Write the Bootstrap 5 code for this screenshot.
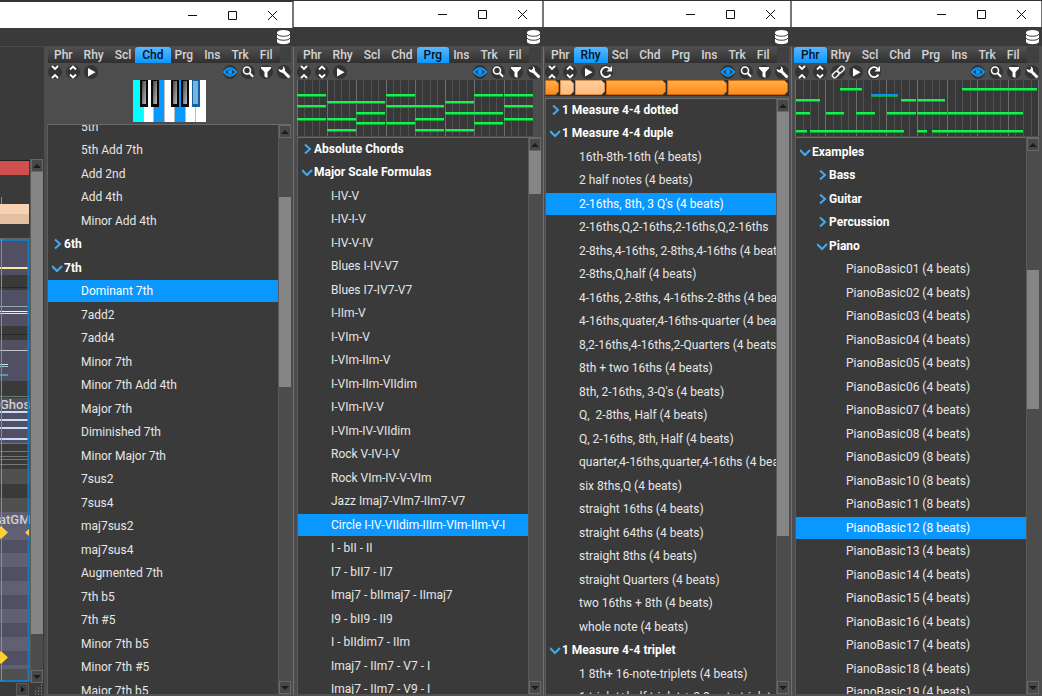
<!DOCTYPE html>
<html lang="en">
<head>
<meta charset="utf-8">
<meta name="viewport" content="width=device-width, initial-scale=1">
<title>Browser panels</title>
<link href="https://cdn.jsdelivr.net/npm/bootstrap@5.3.0/dist/css/bootstrap.min.css" rel="stylesheet">
<style>
  body { background: #3a3a3a; color: #e6e6e6; font-family: Roboto, "Liberation Sans", sans-serif; font-size: 12px; line-height: 20px; }
  button { color: inherit; background: none; border: 0; padding: 0; }
  svg { display: block; }
  .win { border-top: 1px solid #333; min-width: 0; }
  .win-a { flex: 293 1 0; border-top-width: 2px; }
  .win-b { flex: 250 1 0; }
  .win-c { flex: 248 1 0; }
  .win-d { flex: 251 1 0; }
  .titlebar { height: 26px; flex: none; background: #fff; color: #111; border-right: 1px solid #777; }
  .win + .win .titlebar { border-left: 1px solid #777; }
  .titlebar button { width: 40px; }
  .strip { height: 20px; flex: none; background: #3a3a3a; border-bottom: 1px solid #4a4a4a; padding-right: 2px; }
  .win-a .strip { height: 19px; }
  .pane { background: #4d4d4d; padding: 0 2px 0 4px; min-width: 0; min-height: 0; border-bottom: 2px solid #505050; }
  .win + .win .pane { border-left: 1px solid #707070; padding-left: 3px; }
  .win-c.win .pane { padding-left: 1px !important; }
  .win-d .pane { padding-right: 3px; }
  .tabstrip { height: 16px; gap: 1px; background: linear-gradient(#505050, #303030); padding: 0 2px 0 1px; width: max-content; }
  .tabrow { background: #404040; flex: none; }
  .tabstrip button { padding: 0 5px; line-height: 15px; font-weight: 500; color: #d4d4d4; }
  .tabstrip button.active { background: linear-gradient(#5ab8ff, #0a98ff); color: #06121c; padding: 0 7px; margin: 0 -2px; border-radius: 3px 3px 0 0; }
  .tools { height: 17px; flex: none; overflow: hidden; margin: 0 -2px; }
  .tools button { width: 18px; flex: none; }
  .tree { background: #3a3a3a; border-top: 1px solid #6a6a6a; border-left: 1px solid #5c5c5c; min-height: 0; }
  .win-a .tree { margin-left: -1px; }
  .rows { display: grid; grid-auto-rows: 23px 24px; align-content: start; margin: -1px 0 0; padding: 0; list-style: none; min-width: 0; }
  .win-a .rows { margin-top: -10px; }
  .win-d .rows { margin-top: 2px; }
  .rows li { height: 22px; margin-top: 1px; line-height: 22px; padding-left: 33px; white-space: pre; overflow: hidden; }
  .rows .deep { padding-left: 50px; }
  .rows .folder { padding-left: 4px; font-weight: 700; color: #fff; }
  .rows .sub { padding-left: 21px; }
  .rows .folder button { display: flex; align-items: center; gap: 1px; font-weight: inherit; line-height: inherit; }
  .rows .picked { background: #0a98ff; color: #fff; }
  .scroller { width: 13px; flex: none; background: #4c4c4c; border-left: 1px solid #5a5a5a; }
  .scroller button { height: 13px; flex: none; border: 1px solid #686868; background: #484848; color: #222; }
  .thumb { background: #858585; }
  .preview-s { height: 18px; flex: none; }
  .preview-m { height: 44px; flex: none; }
  .preview-l { height: 57px; flex: none; }
  .lane { width: 44px; flex: none; background: #3a3a3a; }
  .lane svg text { font-size: 13px; font-weight: 500; fill: #d0d0d0; }
  .lane-top { height: 112px; flex: none; }
  .lane-foot { height: 13px; flex: none; }
</style>
</head>
<body>
<main class="d-flex vh-100 overflow-hidden">

  <section class="win win-a d-flex flex-column" data-tab="Chd" data-tools="fold,unfold,play">
    <div class="d-flex flex-fill overflow-hidden">
      <div class="lane d-flex flex-column">
        <div class="d-flex flex-fill overflow-hidden">
          <svg width="30" height="635" viewBox="0 47 30 635" aria-label="Track lanes">
            <rect y="47" width="30" height="635" fill="#3a3a3a"/>
            <path d="M0 160.500H30" stroke="#222"/>
            <rect y="161" width="29" height="14" fill="#d05050"/>
            <rect x="1" y="197" width="1" height="7" fill="#888"/>
            <rect y="204" width="29" height="10" fill="#f8d2b2"/><rect y="214" width="29" height="10" fill="#e4c0a2"/>
            <rect y="238" width="30" height="1" fill="#666"/>
            <g fill="#505062"><rect y="239" width="30" height="36"/><rect y="290" width="30" height="36"/><rect y="340" width="30" height="41"/><rect y="398" width="30" height="46"/></g>
            <g fill="#262626"><rect y="287" width="30" height="1"/><rect y="334" width="30" height="1"/></g>
            <rect y="267" width="29" height="2" fill="#ffe9a0"/>
            <rect y="306" width="29" height="1" fill="#94a8b4"/><rect y="311" width="29" height="1" fill="#ffe8ee"/><rect y="313" width="29" height="1" fill="#d4f0c0"/>
            <rect y="350" width="29" height="1" fill="#c4c4c4"/>
            <rect y="364" width="8" height="1" fill="#ddd"/><rect y="366" width="8" height="1" fill="#8cc8e8"/><rect y="374" width="8" height="2" fill="#5c94ac"/>
            <rect y="396" width="29" height="1" fill="#648064"/>
            <g fill="#c8dcff"><rect y="411" width="29" height="2"/><rect y="419" width="29" height="2"/><rect y="427" width="29" height="2"/><rect y="438" width="29" height="2"/></g>
            <g fill="#777"><rect y="443" width="29" height="1"/><rect y="451" width="29" height="1"/><rect y="456" width="29" height="1"/><rect y="464" width="29" height="1"/></g>
            <rect y="459" width="29" height="1" fill="#648064"/>
            <text x="0" y="409">Ghos</text>
            <rect y="469" width="30" height="15" fill="#505050"/><rect y="498" width="30" height="14" fill="#505050"/>
            <rect y="512" width="30" height="157" fill="#606072"/>
            <g fill="#505062"><rect y="540" width="30" height="13"/><rect y="567" width="30" height="14"/><rect y="595" width="30" height="14"/><rect y="623" width="30" height="14"/><rect y="651" width="30" height="14"/></g>
            <rect y="669" width="30" height="12" fill="#505050"/>
            <text x="-1" y="524">atGM</text>
            <path d="M0 240H28.500V681H0" fill="none" stroke="#1878b8" stroke-width="2"/>
            <rect x="1" y="239" width="1" height="442" fill="#8a8a9a"/>
            <path d="M1 526l7 6.500-7 6.500-7-6.500zM1 651l7 6.500-7 6.500-7-6.500zM29 529v7l-4-3.500z" fill="#ffd034"/>
          </svg>
          <div class="d-flex flex-column flex-fill">
            <div class="lane-top"></div>
            <div class="flex-fill d-flex" data-scroll="0,458,36"></div>
          </div>
        </div>
        <div class="lane-foot d-flex justify-content-between">
          <svg width="30" height="13"><path d="M16.500 .5h12v12h-12z" fill="#444" stroke="#5c5c5c"/><path d="M21 3.500v6l4-3z" fill="#151515"/></svg>
          <svg width="14" height="13"><path d="M11 2h1M11 5h1M8 5h1M11 8h1M8 8h1M5 8h1M11 11h1M8 11h1M5 11h1" stroke="#aaa"/></svg>
        </div>
      </div>
      <div class="pane d-flex flex-column flex-fill" data-scroll-tree="59,190,294">
        <div class="preview-m d-flex justify-content-center">
          <svg width="73" height="42" role="img" aria-label="Chord keys">
            <defs><linearGradient id="key" x1="0" x2="1" y1="0" y2="1"><stop offset="0" stop-color="#444"/><stop offset="1" stop-color="#bbb"/></linearGradient></defs>
            <rect width="73" height="42" fill="#fff"/><rect width="10" height="42" fill="#00ffff"/>
            <rect x="21" width="10" height="42" fill="#0a98ff"/><rect x="42" width="10" height="42" fill="#0a98ff"/>
            <path d="M10.500 0v42M20.500 0v42M31.500 0v42M41.500 0v42M52.500 0v42M62.500 0v42" stroke="#bbb"/>
            <g fill="#080808"><rect x="7" width="8" height="27"/><rect x="18" width="8" height="27"/><rect x="38" width="8" height="27"/><rect x="48" width="8" height="27"/></g>
            <g fill="url(#key)"><rect x="9" y="1" width="4" height="23"/><rect x="20" y="1" width="4" height="23"/><rect x="40" y="1" width="4" height="23"/><rect x="50" y="1" width="4" height="23"/></g>
            <rect x="59" width="8" height="27" fill="#1064a4"/><rect x="60" y="1" width="5" height="23" fill="#7cb4d4"/>
          </svg>
        </div>
        <script type="text/plain">5th
5th Add 7th
Add 2nd
Add 4th
Minor Add 4th
+6th
-7th
*Dominant 7th
7add2
7add4
Minor 7th
Minor 7th Add 4th
Major 7th
Diminished 7th
Minor Major 7th
7sus2
7sus4
maj7sus2
maj7sus4
Augmented 7th
7th b5
7th #5
Minor 7th b5
Minor 7th #5
Major 7th b5</script>
      </div>
    </div>
  </section>

  <section class="win win-b d-flex flex-column" data-tab="Prg" data-tools="fold,unfold,play">
    <div class="pane d-flex flex-column flex-fill" data-scroll-tree="0,43,486">
      <div class="preview-l"><svg width="236" height="56" data-notes="236,59" role="img" aria-label="Progression notes"></svg></div>
      <script type="text/plain">+Absolute Chords
-Major Scale Formulas
I-IV-V
I-IV-I-V
I-IV-V-IV
Blues I-IV-V7
Blues I7-IV7-V7
I-IIm-V
I-VIm-V
I-VIm-IIm-V
I-VIm-IIm-VIIdim
I-VIm-IV-V
I-VIm-IV-VIIdim
Rock V-IV-I-V
Rock VIm-IV-V-VIm
Jazz Imaj7-VIm7-IIm7-V7
*Circle I-IV-VIIdim-IIIm-VIm-IIm-V-I
I - bII - II
I7 - bII7 - II7
Imaj7 - bIImaj7 - IImaj7
I9 - bII9 - II9
I - bIIdim7 - IIm
Imaj7 - IIm7 - V7 - I
Imaj7 - IIm7 - V9 - I</script>
    </div>
  </section>

  <section class="win win-c d-flex flex-column" data-tab="Rhy" data-tools="fold,unfold,play,loop">
    <div class="pane d-flex flex-column flex-fill" data-scroll-tree="0,423,145">
      <div class="preview-s">
        <svg width="244" height="17" role="img" aria-label="Rhythm steps">
          <defs><linearGradient id="org" x2="0" y2="1"><stop offset="0" stop-color="#ffb04c"/><stop offset="1" stop-color="#ff8818"/></linearGradient>
          <linearGradient id="lite" x2="0" y2="1"><stop offset="0" stop-color="#ffd0a0"/><stop offset="1" stop-color="#ffb878"/></linearGradient></defs>
          <rect width="244" height="16" fill="#303030"/>
          <g fill="url(#org)" stroke="#c86c14"><path d="M.5 .5h10l3 3v8l-3 3h-10zM61.500 .5h56l3 3v8l-3 3h-56zM122.500 .5h56l3 3v8l-3 3h-56zM183.500 .5h56l3 3v8l-3 3h-56z"/></g>
          <g fill="url(#lite)" stroke="#d89050"><path d="M15.500 .5h10l3 3v8l-3 3h-10zM30.500 .5h26l3 3v8l-3 3h-26z"/></g>
        </svg>
      </div>
      <script type="text/plain">+1 Measure 4-4 dotted
-1 Measure 4-4 duple
16th-8th-16th (4 beats)
2 half notes (4 beats)
*2-16ths, 8th, 3 Q's (4 beats)
2-16ths,Q,2-16ths,2-16ths,Q,2-16ths
2-8ths,4-16ths, 2-8ths,4-16ths (4 beats)
2-8ths,Q,half (4 beats)
4-16ths, 2-8ths, 4-16ths-2-8ths (4 beats)
4-16ths,quater,4-16ths-quarter (4 beats)
8,2-16ths,4-16ths,2-Quarters (4 beats)
8th + two 16ths (4 beats)
8th, 2-16ths, 3-Q's (4 beats)
Q,  2-8ths, Half (4 beats)
Q, 2-16ths, 8th, Half (4 beats)
quarter,4-16ths,quarter,4-16ths (4 beats)
six 8ths,Q (4 beats)
straight 16ths (4 beats)
straight 64ths (4 beats)
straight 8ths (4 beats)
straight Quarters (4 beats)
two 16ths + 8th (4 beats)
whole note (4 beats)
-1 Measure 4-4 triplet
1 8th+ 16-note-triplets (4 beats)
1 triplet+half triplet + 2 8-note-triplets</script>
    </div>
  </section>

  <section class="win win-d d-flex flex-column" data-tab="Phr" data-tools="fold,unfold,link,play,loop">
    <div class="pane d-flex flex-column flex-fill" data-scroll-tree="119,139,271">
      <div class="preview-l"><svg width="244" height="56" data-phrase="244" role="img" aria-label="Phrase notes"></svg></div>
      <script type="text/plain">-Examples
>+Bass
>+Guitar
>+Percussion
>-Piano
>PianoBasic01 (4 beats)
>PianoBasic02 (4 beats)
>PianoBasic03 (4 beats)
>PianoBasic04 (4 beats)
>PianoBasic05 (4 beats)
>PianoBasic06 (4 beats)
>PianoBasic07 (4 beats)
>PianoBasic08 (4 beats)
>PianoBasic09 (8 beats)
>PianoBasic10 (8 beats)
>PianoBasic11 (8 beats)
>*PianoBasic12 (8 beats)
>PianoBasic13 (4 beats)
>PianoBasic14 (4 beats)
>PianoBasic15 (4 beats)
>PianoBasic16 (4 beats)
>PianoBasic17 (4 beats)
>PianoBasic18 (4 beats)
>PianoBasic19 (4 beats)</script>
    </div>
  </section>
</main>

<script src="https://cdn.jsdelivr.net/npm/bootstrap@5.3.0/dist/js/bootstrap.bundle.min.js"></script>
<script>
const disc = '<circle cx="9" cy="8" r="7" fill="#343434"/>';
const icons = {
  fold: '<path d="M6 2l3 3 3-3M6 14l3-3 3 3" fill="none" stroke="#fff" stroke-width="1.800"/>',
  unfold: '<path d="M6 5.500l3-3 3 3M6 10.500l3 3 3-3" fill="none" stroke="#fff" stroke-width="1.800"/>',
  play: '<path d="M6 4v8.500l7.500-4.200z" fill="#fff"/>',
  loop: '<path d="M13.500 10.500a5 5 0 1 1-1-6" fill="none" stroke="#fff" stroke-width="1.800"/><path d="M15 2v5.500h-5.500z" fill="#fff"/>',
  link: '<g fill="none" stroke="#eee" stroke-width="1.500"><rect x="8" y="3.500" width="7.500" height="4.500" rx="2.200" transform="rotate(-45 11.700 5.700)"/><rect x="3" y="8.200" width="7.500" height="4.500" rx="2.200" transform="rotate(-45 6.700 10.400)"/></g>',
  eye: '<path d="M3 8Q9 .5 15 8Q9 15.500 3 8z" fill="none" stroke="#0a98ff" stroke-width="2"/><circle cx="9" cy="8" r="2.400" fill="#0a98ff"/>',
  search: '<circle cx="8" cy="6.500" r="3.500" fill="none" stroke="#fff" stroke-width="1.600"/><path d="M10.500 9l3.500 3.800" stroke="#fff" stroke-width="2"/>',
  filter: '<path d="M4 3h10v1.500l-3.500 3.500v6l-3-1.500V8L4 4.500z" fill="#fff"/>',
  wrench: '<path d="M8 7l5.500 5.500" stroke="#fff" stroke-width="3" stroke-linecap="round"/><path d="M3.500 5a3.600 3.600 0 0 0 6 2.700A3.600 3.600 0 0 0 7.500 2.300L8.300 4.500 6.500 6z" fill="#fff"/>'
};
const tool = n => `<button type="button" aria-label="${n}"><svg width="18" height="16">${disc}${icons[n]}</svg></button>`;
const wbtn = (n, d) => `<button type="button" class="d-flex align-items-center justify-content-center" aria-label="${n}"><svg width="11" height="11" fill="none" stroke="#111"><path d="${d}"/></svg></button>`;
const arrow = d => `<button type="button" aria-label="Scroll" class="d-flex align-items-center justify-content-center"><svg width="8" height="4"><path d="${d}" fill="#1c1c1c"/></svg></button>`;
const scroller = spec => {
  const [a, b, c] = spec.split(',');
  return `<div class="scroller d-flex flex-column">${arrow('M0 4l4-4 4 4z')}<div style="flex:${a} 1 0"></div><div class="thumb" style="flex:${b} 1 0"></div><div style="flex:${c} 1 0"></div>${arrow('M0 0h8l-4 4z')}</div>`;
};
const chevron = open => `<svg width="11" height="12" fill="none" stroke="#42aaf0" stroke-width="2"><path d="${open ? 'M0 4l5 5 5-5' : 'M3 1.500l5 4.500-5 4.500'}"/></svg>`;

function row(line) {
  const deep = line[0] === '>';
  if (deep) line = line.slice(1);
  if (/^[+-]/.test(line)) {
    const open = line[0] === '-';
    return `<li class="folder${deep ? ' sub' : ''}"><button type="button" aria-expanded="${open}">${chevron(open)}${line.slice(1)}</button></li>`;
  }
  const picked = line[0] === '*';
  return `<li class="${deep ? 'deep' : ''}${picked ? ' picked' : ''}">${picked ? line.slice(1) : line}</li>`;
}

document.querySelectorAll('.win').forEach(win => {
  win.insertAdjacentHTML('afterbegin',
    `<header class="titlebar d-flex justify-content-end">${wbtn('Minimize', 'M1 5.500h9')}${wbtn('Maximize', 'M1.500 1.500h8v8h-8z')}${wbtn('Close', 'M1 1l9 9M10 1l-9 9')}</header>
     <div class="strip d-flex justify-content-end align-items-center"><button type="button" aria-label="Library"><svg width="15" height="16"><path d="M1 4v8.500c0 3.500 13 3.500 13 0V4z" fill="#fff"/><ellipse cx="7.500" cy="3.700" rx="6.500" ry="2.700" fill="#fff"/><path d="M1 5c1 3 12 3 13 0M1 9c1 3 12 3 13 0" fill="none" stroke="#383838"/></svg></button></div>`);
  const pane = win.querySelector('.pane');
  const tabs = ['Phr', 'Rhy', 'Scl', 'Chd', 'Prg', 'Ins', 'Trk', 'Fil']
    .map(t => `<button type="button" role="tab" class="${t === win.dataset.tab ? 'active' : ''}">${t}</button>`).join('');
  pane.insertAdjacentHTML('afterbegin',
    `<div class="tabrow"><div class="tabstrip d-flex" role="tablist">${tabs}</div></div>
     <div class="tools d-flex justify-content-between"><div class="d-flex">${win.dataset.tools.split(',').map(tool).join('')}</div><div class="d-flex">${['eye', 'search', 'filter', 'wrench'].map(tool).join('')}</div></div>`);
  const src = pane.querySelector('script');
  src.insertAdjacentHTML('afterend',
    `<div class="tree d-flex flex-fill"><div class="flex-fill overflow-hidden"><ul class="rows">${src.textContent.split('\n').map(row).join('')}</ul></div>${scroller(pane.dataset.scrollTree)}</div>`);
});
document.querySelectorAll('[data-scroll]').forEach(el => el.innerHTML = scroller(el.dataset.scroll));

const grid = (w, step) => {
  let s = `<rect width="${w}" height="56" fill="#383838"/>`;
  for (let i = 0; i * step < w; i++) s += `<rect x="${Math.round(i * step)}" width="1" height="56" fill="${i % 4 ? '#505050' : '#6c6c6c'}"/>`;
  return s;
};
const note = (x, y, w, c = '#18f050') => `<rect x="${x}" y="${y - 1}" width="${w}" height="3" fill="#10a03c"/><rect x="${x}" y="${y - 1}" width="${w}" height="2" fill="${c}"/>`;
const chords = [[15, 26, 39], [22, 39, 50], [22, 33, 43], [15, 26, 43], [26, 39, 50], [22, 33, 50], [15, 33, 43], [15, 26, 39]];
document.querySelector('[data-notes]').innerHTML = grid(236, 7.375) +
  chords.map((c, i) => c.map(y => note(Math.round(i * 29.5), y, 29)).join('')).join('');
const phrase = [[45, 9, 22], [167, 9, 75], [1, 20, 24], [106, 20, 15], [122, 20, 28], [1, 33, 14], [31, 33, 18], [61, 33, 19], [92, 33, 29], [122, 33, 30], [153, 33, 75], [1, 51, 11], [15, 51, 94], [122, 51, 10], [137, 51, 91]];
document.querySelector('[data-phrase]').innerHTML = grid(244, 7.6) + phrase.map(n => note(...n)).join('') + note(76, 15, 27, '#1090f0');
</script>
</body>
</html>
